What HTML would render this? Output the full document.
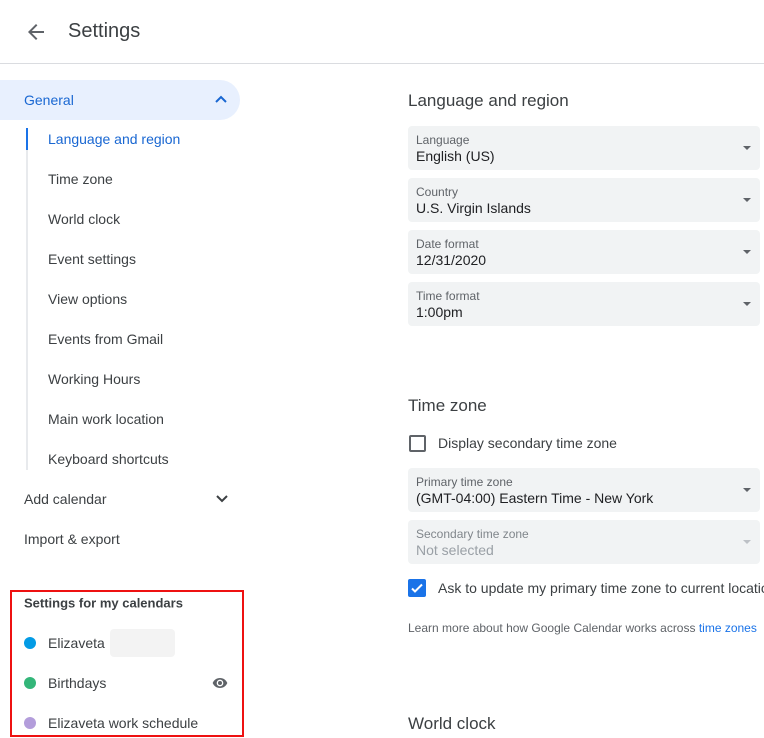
<!DOCTYPE html>
<html><head><style>
*{margin:0;padding:0;box-sizing:border-box}
body{width:764px;height:738px;overflow:hidden;background:#fff;font-family:"Liberation Sans",Arial,sans-serif;color:#3c4043;position:relative}
.a{position:absolute}
.nav{position:absolute;left:48px;font-size:14px;color:#3c4043;transform:translateY(-50%)}
.sel{position:absolute;left:408px;width:352px;height:44px;background:#f1f3f4;border-radius:4px}
.sel .l{position:absolute;left:8px;top:7px;font-size:12px;color:#5f6368}
.sel .v{position:absolute;left:8px;top:22px;font-size:14px;color:#202124}
.sel .ar{position:absolute;right:9px;top:20px;width:0;height:0;border-left:4px solid transparent;border-right:4px solid transparent;border-top:4px solid #5f6368}
.h{position:absolute;left:408px;font-size:17px;color:#3c4043;transform:translateY(-50%)}
.dot{position:absolute;left:24px;width:12px;height:12px;border-radius:50%}
</style></head><body>
<svg class="a" style="left:24px;top:20px" width="24" height="24" viewBox="0 0 24 24"><path d="M20 11H7.8l5.6-5.6L12 4l-8 8 8 8 1.4-1.4L7.8 13H20z" fill="#5f6368"/></svg>
<div class="a" style="left:68px;top:20px;font-size:20px;color:#3c4043">Settings</div>
<div class="a" style="left:0;top:63px;width:764px;height:1px;background:#dadce0"></div>

<div class="a" style="left:0;top:80px;width:240px;height:40px;background:#e8f0fe;border-radius:0 20px 20px 0"></div>
<div class="nav" style="left:24px;top:100px;color:#1967d2">General</div>
<svg class="a" style="left:214px;top:94px" width="14" height="10" viewBox="0 0 14 10"><path d="M2 8l5-5 5 5" stroke="#1967d2" stroke-width="2" fill="none"/></svg>
<div class="a" style="left:26px;top:128px;width:2px;height:342px;background:#e8eaed"></div>
<div class="a" style="left:26px;top:128px;width:2px;height:22px;background:#1a73e8"></div>
<div class="nav" style="top:139px;color:#1967d2">Language and region</div>
<div class="nav" style="top:179px">Time zone</div>
<div class="nav" style="top:219px">World clock</div>
<div class="nav" style="top:259px">Event settings</div>
<div class="nav" style="top:299px">View options</div>
<div class="nav" style="top:339px">Events from Gmail</div>
<div class="nav" style="top:379px">Working Hours</div>
<div class="nav" style="top:419px">Main work location</div>
<div class="nav" style="top:459px">Keyboard shortcuts</div>
<div class="nav" style="left:24px;top:499px">Add calendar</div>
<svg class="a" style="left:215px;top:494px" width="14" height="10" viewBox="0 0 14 10"><path d="M2 2l5 5 5-5" stroke="#3c4043" stroke-width="2" fill="none"/></svg>
<div class="nav" style="left:24px;top:539px">Import &amp; export</div>

<div class="nav" style="left:24px;top:603px;font-size:13px;font-weight:bold;color:#3c4043">Settings for my calendars</div>
<div class="dot" style="top:637px;background:#039be5"></div>
<div class="nav" style="top:643px">Elizaveta</div>
<div class="a" style="left:110px;top:629px;width:65px;height:28px;background:#f3f3f3;border-radius:4px"></div>
<div class="dot" style="top:677px;background:#33b679"></div>
<div class="nav" style="top:683px">Birthdays</div>
<svg class="a" style="left:211px;top:675px" width="18" height="16" viewBox="0 0 24 24"><path d="M12 4.5C7 4.5 2.7 7.6 1 12c1.7 4.4 6 7.5 11 7.5s9.3-3.1 11-7.5c-1.7-4.4-6-7.5-11-7.5zM12 17a5 5 0 110-10 5 5 0 010 10zm0-8a3 3 0 100 6 3 3 0 000-6z" fill="#5f6368"/></svg>
<div class="dot" style="top:717px;background:#b39ddb"></div>
<div class="nav" style="top:723px">Elizaveta work schedule</div>
<div class="a" style="left:10px;top:590px;width:234px;height:147px;border:2px solid #ee1111"></div>

<div class="h" style="top:101px">Language and region</div>
<div class="sel" style="top:126px"><div class="l">Language</div><div class="v">English (US)</div><div class="ar"></div></div>
<div class="sel" style="top:178px"><div class="l">Country</div><div class="v">U.S. Virgin Islands</div><div class="ar"></div></div>
<div class="sel" style="top:230px"><div class="l">Date format</div><div class="v">12/31/2020</div><div class="ar"></div></div>
<div class="sel" style="top:282px"><div class="l">Time format</div><div class="v">1:00pm</div><div class="ar"></div></div>

<div class="h" style="top:406px">Time zone</div>
<div class="a" style="left:409px;top:435px;width:17px;height:17px;border:2px solid #5f6368;border-radius:2px"></div>
<div class="nav" style="left:438px;top:443px">Display secondary time zone</div>
<div class="sel" style="top:468px"><div class="l">Primary time zone</div><div class="v">(GMT-04:00) Eastern Time - New York</div><div class="ar"></div></div>
<div class="sel" style="top:520px"><div class="l" style="color:#80868b">Secondary time zone</div><div class="v" style="color:#9aa0a6">Not selected</div><div class="ar" style="border-top-color:#bdc1c6"></div></div>
<div class="a" style="left:408px;top:579px;width:18px;height:18px;background:#1a73e8;border-radius:2px"></div>
<svg class="a" style="left:408px;top:579px" width="18" height="18" viewBox="0 0 18 18"><path d="M4 9.5l3 3 7-7" stroke="#fff" stroke-width="2" fill="none"/></svg>
<div class="nav" style="left:438px;top:588px;white-space:nowrap">Ask to update my primary time zone to current location</div>
<div class="a" style="left:408px;top:621px;font-size:12px;color:#5f6368;white-space:nowrap">Learn more about how Google Calendar works across <span style="color:#1a73e8">time zones</span></div>
<div class="h" style="top:724px">World clock</div>
</body></html>
